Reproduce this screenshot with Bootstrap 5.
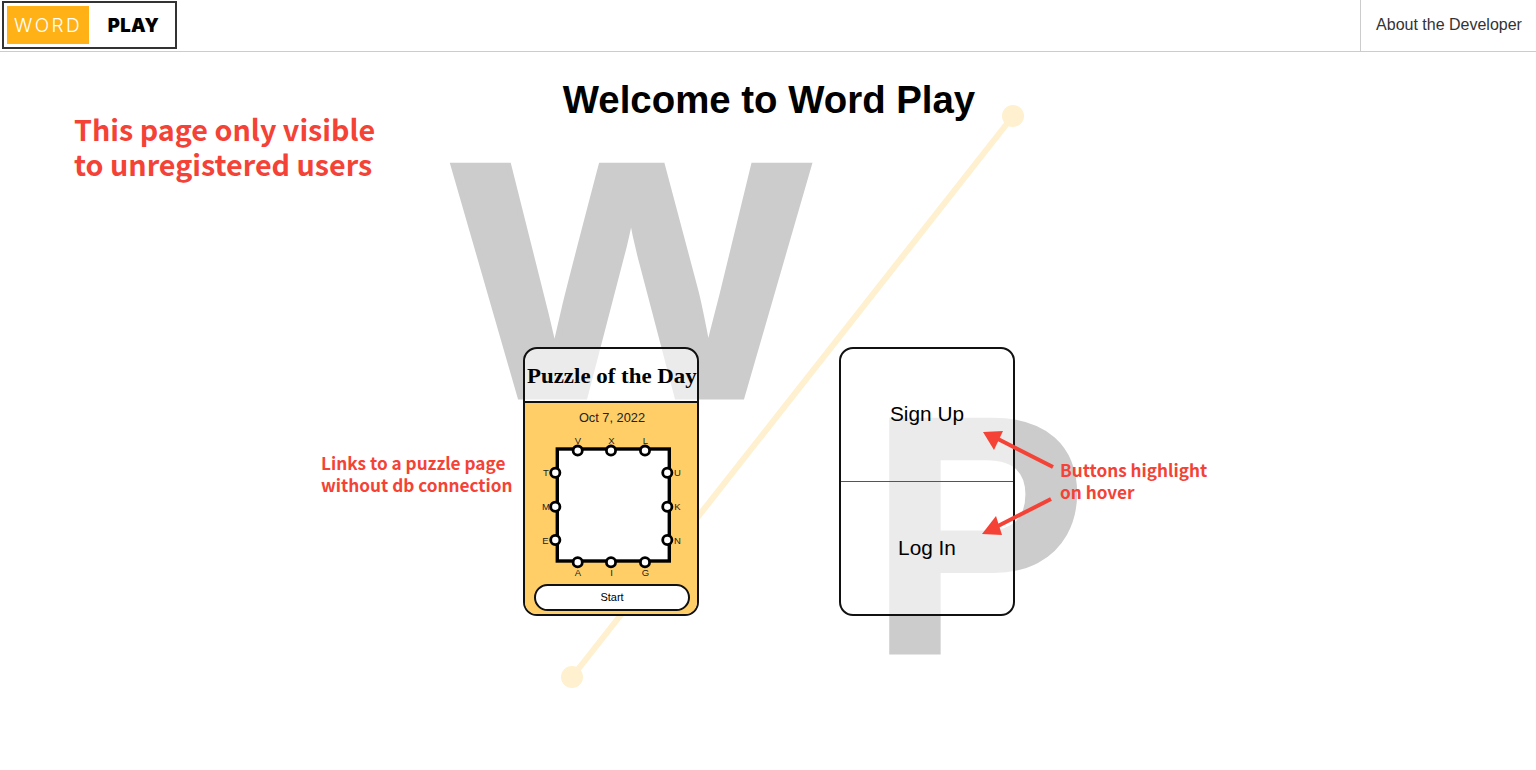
<!DOCTYPE html>
<html lang="en">
<head>
  <meta charset="UTF-8" />
  <meta name="viewport" content="width=device-width, initial-scale=1.0" />
  <title>Word Play</title>
  <link href="https://cdn.jsdelivr.net/npm/bootstrap@5.3.3/dist/css/bootstrap.min.css" rel="stylesheet" />
  <script src="https://cdn.jsdelivr.net/npm/bootstrap@5.3.3/dist/js/bootstrap.bundle.min.js"></script>
  <style>
    body { font-family: "Liberation Sans", Arial, sans-serif; color: #000; background: #fff; height: 770px; overflow: hidden; position: relative; }
    .wp-nav { height: 52px; border-bottom: 1px solid #ccc; padding: 0; align-items: stretch; flex-wrap: nowrap; }
    .wp-logo { width: 175px; height: 48px; margin: 1px 0 0 2px; border: 2px solid #333; padding: 3px; font-family: Inter, sans-serif; font-size: 18.5px; line-height: 1; }
    .wp-logo-word { width: 82px; background: #ffb115; color: #fff; font-weight: 300; font-size: 19px; letter-spacing: 2.4px; }
    .wp-logo-play { font-weight: 900; color: #000; letter-spacing: .3px; padding-left: 6px; }
    .wp-about { width: 176px; border-left: 1px solid #ccc; font-size: 16px; color: #333; text-decoration: none; padding: 0 0 1px 1px; }
    .wp-title { font-size: 38.4px; font-weight: 700; line-height: 46px; margin: 25px 0 0; padding-left: 2px; position: relative; }
    .wp-bg-letter { position: absolute; color: #ccc; -webkit-text-stroke: 5px #ccc; font-weight: 700; line-height: 1; font-size: 337px; transform-origin: 0 0; }
    .wp-w { left: 453px; top: 112px; transform: scaleX(1.12); }
    .wp-p { left: 870px; top: 367px; transform: scaleX(.96); }
    .wp-line { position: absolute; left: 0; top: 0; }
    .wp-stage { position: relative; gap: 140px; margin-top: 224px; padding-left: 2px; }
    .wp-panel { width: 176px; height: 269px; border: 2px solid #111; border-radius: 14px; overflow: hidden; background: rgba(255,255,255,.6); }
    .wp-puzzle-head { height: 54px; border-bottom: 2px solid #111; font-family: "Liberation Serif", serif; font-weight: 700; font-size: 21px; white-space: nowrap; padding-left: 2px; }
    .wp-puzzle-head span { display: inline-block; transform: scaleX(1.09); padding-top: 3px; }
    .wp-puzzle-body { background: #ffce67; height: 213px; padding-top: 7px; }
    .wp-date { font-size: 12.8px; line-height: 16px; color: #222; padding-left: 2px; }
    .wp-board { display: block; margin: 6px auto 0; }
    .wp-board text { font-family: "Liberation Sans", Arial, sans-serif; font-size: 9.5px; text-anchor: middle; fill: #222; }
    .wp-start { width: 156px; height: 27px; border: 2px solid #111; border-radius: 14px; background: #fff; font-size: 11px; padding: 0; margin: 2px 0 0 2px; color: #000; }
    .wp-auth-btn { flex: 0 0 132px; background: transparent; border: 0; font-size: 20.8px; color: #000; padding: 0 0 2px; }
    .wp-auth-btn + .wp-auth-btn { flex: 1 1 0; border-top: 1px solid #555; padding: 0; }
    .wp-note { position: absolute; color: #f44336; font-family: "Noto Sans CJK JP", "Noto Sans", sans-serif; font-weight: 700; white-space: nowrap; }
    .wp-note-big { left: 74px; top: 111px; font-size: 28.7px; line-height: 35px; }
    .wp-note-small { font-size: 17.2px; line-height: 22px; }
    .wp-note-links { left: 321px; top: 452px; }
    .wp-note-hover { left: 1060px; top: 459px; }
    .wp-arrows { position: absolute; left: 0; top: 0; pointer-events: none; }
  </style>
</head>
<body>
  <span class="wp-bg-letter wp-w">W</span>
  <span class="wp-bg-letter wp-p">P</span>
  <svg class="wp-line" width="1536" height="770">
    <line x1="572" y1="677" x2="1013" y2="116" stroke="#fff0cf" stroke-width="6" />
    <circle cx="572" cy="677" r="11" fill="#fff0cf" />
    <circle cx="1013" cy="116" r="11" fill="#fff0cf" />
  </svg>

  <nav class="navbar wp-nav justify-content-between bg-transparent position-relative">
    <a class="wp-logo d-flex text-decoration-none" href="#">
      <span class="wp-logo-word d-flex align-items-center justify-content-center">WORD</span>
      <span class="wp-logo-play flex-grow-1 d-flex align-items-center justify-content-center">PLAY</span>
    </a>
    <a class="wp-about d-flex align-items-center justify-content-center" href="#">About the Developer</a>
  </nav>

  <h1 class="wp-title text-center">Welcome to Word Play</h1>

  <main class="wp-stage d-flex justify-content-center">
    <section class="wp-panel d-flex flex-column">
      <div class="wp-puzzle-head d-flex align-items-center justify-content-center"><span>Puzzle of the Day</span></div>
      <div class="wp-puzzle-body d-flex flex-column align-items-center">
        <div class="wp-date">Oct 7, 2022</div>
        <svg class="wp-board" width="150" height="150" viewBox="0 0 150 150" id="board"></svg>
        <button class="wp-start" type="button">Start</button>
      </div>
    </section>
    <section class="wp-panel d-flex flex-column">
      <button class="wp-auth-btn" type="button">Sign Up</button>
      <button class="wp-auth-btn" type="button">Log In</button>
    </section>
  </main>

  <div class="wp-note wp-note-big">This page only visible<br />to unregistered users</div>
  <div class="wp-note wp-note-small wp-note-links">Links to a puzzle page<br />without db connection</div>
  <div class="wp-note wp-note-small wp-note-hover">Buttons highlight<br />on hover</div>

  <svg class="wp-arrows" width="1536" height="770" fill="#f44336" stroke="none">
    <line x1="1053" y1="467" x2="998" y2="439" stroke="#f44336" stroke-width="4" />
    <polygon points="983,432 1003,431 994,450" />
    <line x1="1051" y1="499" x2="998" y2="526" stroke="#f44336" stroke-width="4" />
    <polygon points="982,534 996,516 1002,535" />
  </svg>

  <script>
    // board origin on the page is 536,432
    const ox = 536, oy = 432;
    const nodes = [
      ["V", 577.7, 450.6, 578, 444], ["X", 611, 450.6, 611.5, 444], ["L", 645, 450.6, 645.5, 444],
      ["T", 555.3, 472.7, 546, 476], ["M", 555.3, 506.7, 546, 510], ["E", 555.3, 540, 545.5, 543.5],
      ["U", 667.3, 472.7, 677.5, 476], ["K", 667.3, 506.7, 677.5, 510], ["N", 667.3, 540, 677.5, 543.5],
      ["A", 577.7, 562.3, 578, 576], ["I", 611, 562.3, 611.5, 576], ["G", 645, 562.3, 645.5, 576]
    ];
    let svg = `<rect x="${557.3 - ox}" y="${449 - oy}" width="112" height="112" fill="#fff" stroke="#000" stroke-width="3.4" />`;
    nodes.forEach(([ch, cx, cy, tx, ty]) => {
      svg += `<circle cx="${cx - ox}" cy="${cy - oy}" r="4.6" fill="#fff" stroke="#000" stroke-width="2.8" />`;
      svg += `<text x="${tx - ox}" y="${ty - oy}">${ch}</text>`;
    });
    document.getElementById("board").innerHTML = svg;
  </script>
</body>
</html>
